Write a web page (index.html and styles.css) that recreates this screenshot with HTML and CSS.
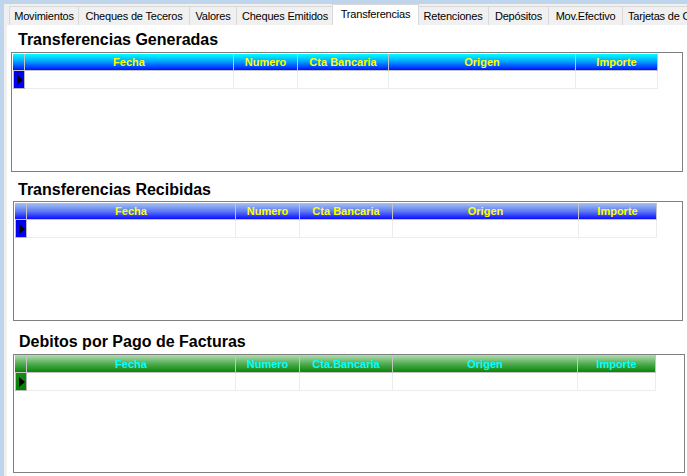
FILE: index.html
```html
<!DOCTYPE html>
<html>
<head>
<meta charset="utf-8">
<link rel="stylesheet" href="styles.css">
</head>
<body>
<div class="tabctl">
  <div class="tabs">
    <div class="tab t1">Movimientos</div>
    <div class="tab t2">Cheques de Teceros</div>
    <div class="tab t3">Valores</div>
    <div class="tab t4">Cheques Emitidos</div>
    <div class="tab active t5">Transferencias</div>
    <div class="tab t6">Retenciones</div>
    <div class="tab t7">Depósitos</div>
    <div class="tab t8">Mov.Efectivo</div>
    <div class="tab t9">Tarjetas de C</div>
  </div>
  <div class="page">
    <div class="title s1">Transferencias Generadas</div>
    <div class="box b1">
      <div class="grid g1 head blue">
        <div class="ind"></div><div>Fecha</div><div>Numero</div><div>Cta Bancaria</div><div>Origen</div><div>Importe</div>
      </div>
      <div class="grid g1 row">
        <div class="ind blue-ind"><span class="tri"></span></div><div></div><div></div><div></div><div></div><div></div>
      </div>
    </div>

    <div class="title s2">Transferencias Recibidas</div>
    <div class="box b2">
      <div class="grid g2 head lblue">
        <div class="ind"></div><div>Fecha</div><div>Numero</div><div>Cta Bancaria</div><div>Origen</div><div>Importe</div>
      </div>
      <div class="grid g2 row">
        <div class="ind blue-ind"><span class="tri"></span></div><div></div><div></div><div></div><div></div><div></div>
      </div>
    </div>

    <div class="title s3">Debitos por Pago de Facturas</div>
    <div class="box b3">
      <div class="grid g3 head green">
        <div class="ind"></div><div>Fecha</div><div>Numero</div><div>Cta.Bancaria</div><div>Origen</div><div>Importe</div>
      </div>
      <div class="grid g3 row">
        <div class="ind green-ind"><span class="tri"></span></div><div></div><div></div><div></div><div></div><div></div>
      </div>
    </div>
  </div>
</div>
</body>
</html>
```
FILE: styles.css
```css
html, body {
  margin: 0;
  padding: 0;
  width: 687px;
  height: 476px;
  overflow: hidden;
  background: #bfd5eb;
  font-family: "Liberation Sans", Arial, sans-serif;
}

.tabctl {
  margin: 4px 0 0 4px;
  height: 472px;
  background: #f0f0f0;
  display: flex;
  flex-direction: column;
}

.tabs {
  display: flex;
  align-items: flex-end;
  height: 21px;
  padding-left: 5px;
  white-space: nowrap;
  overflow: hidden;
}

.tab {
  height: 18px;
  border: 1px solid #d9d9d9;
  border-bottom: none;
  margin-right: -1px;
  background: #f0f0f0;
  font-size: 11px;
  line-height: 18px;
  text-align: center;
  color: #000;
  flex: none;
  letter-spacing: -0.2px;
}

.tab.active {
  height: 20px;
  line-height: 18px;
  background: #fff;
  position: relative;
  z-index: 1;
  margin-left: -1px;
  margin-right: -2px;
}

.t1 { width: 68px; }
.t2 { width: 110px; }
.t3 { width: 46px; }
.t4 { width: 96px; }
.t5 { width: 85px; }
.t6 { width: 70px; }
.t7 { width: 59px; }
.t8 { width: 73px; }
.t9 { width: 62px; text-align: left; padding-left: 5px; }

.page {
  flex: 1;
  background: #fff;
  margin-left: 3px;
  display: flex;
  flex-direction: column;
}

.title {
  font-size: 16px;
  font-weight: bold;
  line-height: 18px;
  color: #000;
  padding-left: 11px;
}
.s1 { margin-top: 6px; margin-bottom: 3px; }
.s2 { margin-top: 9px; margin-bottom: 2px; padding-left: 11px; }
.s3 { margin-top: 12px; margin-bottom: 3px; padding-left: 12px; }

.box {
  border: 1px solid #808080;
  box-sizing: border-box;
  height: 120px;
  background: #fff;
}
.b1 { margin-left: 4px; width: 672px; padding: 1px 0 0 1px; }
.b2 { margin-left: 6px; width: 670px; padding: 1px 0 0 1px; }
.b3 { margin-left: 6px; width: 672px; padding: 0 0 0 1px; height: 119px; }

.grid {
  display: grid;
  width: max-content;
}
.g1 { grid-template-columns: 12px 209px 64px 91px 187px 82px; }
.g2 { grid-template-columns: 12px 209px 64px 93px 186px 78px; }
.g3 { grid-template-columns: 12px 209px 64px 93px 185px 78px; }

.head {
  height: 17px;
  font-size: 11px;
  font-weight: bold;
  line-height: 17px;
  text-align: center;
  box-sizing: border-box;
}
.head > div {
  border-right: 1px solid #c4c4c4;
  border-bottom: 1px solid #c4c4c4;
  box-sizing: border-box;
  height: 17px;
  line-height: 17px;
  overflow: hidden;
}

.blue { background: linear-gradient(to bottom, #00ffff 0%, #00a0ff 45%, #0000ff 100%); color: #ffff00; }
.lblue { background: linear-gradient(to bottom, #a7c3f0 0%, #5b78f5 50%, #0000ff 100%); color: #ffff00; }
.green { background: linear-gradient(to bottom, #b4dcb4 0%, #4eac4e 50%, #008000 100%); color: #00ffff; height: 18px; }
.green > div { height: 18px; line-height: 18px; }

.row {
  height: 18px;
}
.row > div {
  border-right: 1px solid #ececec;
  border-bottom: 1px solid #ececec;
  box-sizing: border-box;
  height: 18px;
}
.row > div.ind {
  border: 1px solid #b8b8b8;
  border-top: none;
  display: flex;
  align-items: center;
  justify-content: center;
}
.blue-ind { background: linear-gradient(to bottom, #0000e0, #0000ff); }
.green-ind { background: linear-gradient(to bottom, #1a8a1a, #008000); }

.tri {
  width: 0;
  height: 0;
  border-top: 5px solid transparent;
  border-bottom: 5px solid transparent;
  border-left: 6px solid #000;
  margin-left: 1px;
}
```
